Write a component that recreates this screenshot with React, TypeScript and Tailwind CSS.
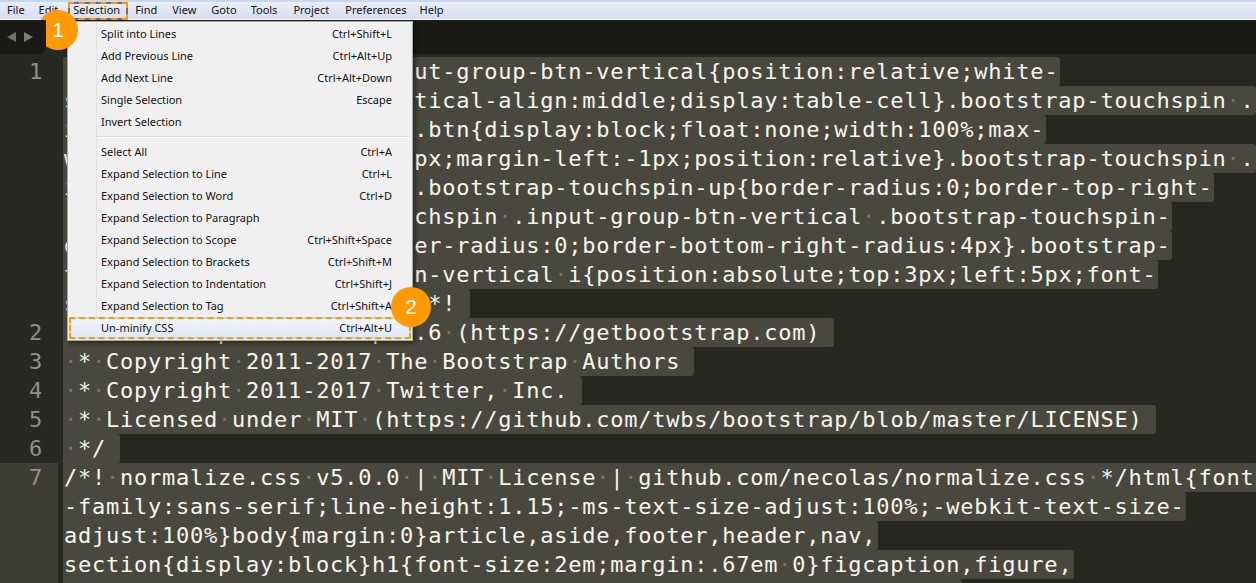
import { Fragment } from "react"

const menuBar = [
  { label: "File", x: "ml-[7px]" },
  { label: "Edit", x: "ml-[14px]" },
  { label: "Selection", x: "ml-[15px]" },
  { label: "Find", x: "ml-[15px]" },
  { label: "View", x: "ml-[15px]" },
  { label: "Goto", x: "ml-[15px]" },
  { label: "Tools", x: "ml-[14px]" },
  { label: "Project", x: "ml-[16px]" },
  { label: "Preferences", x: "ml-[16px]" },
  { label: "Help", x: "ml-[13px]" },
]

const menuGroups = [
  [
    ["Split into Lines", "Ctrl+Shift+L"],
    ["Add Previous Line", "Ctrl+Alt+Up"],
    ["Add Next Line", "Ctrl+Alt+Down"],
    ["Single Selection", "Escape"],
    ["Invert Selection", ""],
  ],
  [
    ["Select All", "Ctrl+A"],
    ["Expand Selection to Line", "Ctrl+L"],
    ["Expand Selection to Word", "Ctrl+D"],
    ["Expand Selection to Paragraph", ""],
    ["Expand Selection to Scope", "Ctrl+Shift+Space"],
    ["Expand Selection to Brackets", "Ctrl+Shift+M"],
    ["Expand Selection to Indentation", "Ctrl+Shift+J"],
    ["Expand Selection to Tag", "Ctrl+Shift+A"],
  ],
]

const codeLines = [
  {
    no: 1,
    rows: [
      ".bootstrap-touchspin .input-group-btn-vertical{position:relative;white-",
      "space:nowrap;width:1%;vertical-align:middle;display:table-cell}.bootstrap-touchspin .",
      "input-group-btn-vertical>.btn{display:block;float:none;width:100%;max-",
      "width:100%;padding:8px 10px;margin-left:-1px;position:relative}.bootstrap-touchspin .",
      "input-group-btn-vertical .bootstrap-touchspin-up{border-radius:0;border-top-right-",
      "radius:4px}.bootstrap-touchspin .input-group-btn-vertical .bootstrap-touchspin-",
      "down{margin-top:-2px;border-radius:0;border-bottom-right-radius:4px}.bootstrap-",
      "touchspin .input-group-btn-vertical i{position:absolute;top:3px;left:5px;font-",
      "size:9px;font-weight:400}/*!",
    ],
  },
  { no: 2, rows: [" * Bootstrap v4.0.0-alpha.6 (https://getbootstrap.com)"] },
  { no: 3, rows: [" * Copyright 2011-2017 The Bootstrap Authors"] },
  { no: 4, rows: [" * Copyright 2011-2017 Twitter, Inc."] },
  { no: 5, rows: [" * Licensed under MIT (https://github.com/twbs/bootstrap/blob/master/LICENSE)"] },
  { no: 6, rows: [" */"] },
  {
    no: 7,
    active: true,
    rows: [
      "/*! normalize.css v5.0.0 | MIT License | github.com/necolas/normalize.css */html{font",
      "-family:sans-serif;line-height:1.15;-ms-text-size-adjust:100%;-webkit-text-size-",
      "adjust:100%}body{margin:0}article,aside,footer,header,nav,",
      "section{display:block}h1{font-size:2em;margin:.67em 0}figcaption,figure,",
      "main{display:block}figure{margin:1em 40px}hr{box-sizing:content-",
    ],
  },
]

// 选中时空格显示为暗色小点
function CodeText({ text }: { text: string }) {
  const parts = text.split(" ")
  return (
    <>
      {parts.map((part, i) => (
        <Fragment key={i}>
          {i > 0 && <span className="text-[#76756b]">·</span>}
          {part}
        </Fragment>
      ))}
    </>
  )
}

function Badge({ n, pos }: { n: number; pos: string }) {
  return (
    <div
      className={`absolute ${pos} flex h-10 w-10 items-center justify-center rounded-full bg-[#ff9a05] font-['Liberation_Sans',sans-serif] text-[21px] text-white`}
    >
      {n}
    </div>
  )
}

function MenuRow({ label, keys }: { label: string; keys: string }) {
  return (
    <div className="flex h-[22px] items-center justify-between pl-[33px] pr-[20px]">
      <span>{label}</span>
      <span>{keys}</span>
    </div>
  )
}

export default function App() {
  return (
    <div className="relative flex h-[583px] w-[1256px] flex-col overflow-hidden bg-[#272822]">
      {/* 菜单栏 */}
      <div className="flex h-[21px] items-center border-b border-white border-t-2 border-t-[#c3d8f2] bg-gradient-to-b from-[#e9eef9] to-[#d8ddf0] font-['Noto_Sans',sans-serif] text-[11px] text-[#111111]">
        {menuBar.map((item) => (
          <span key={item.label} className={item.x}>
            {item.label}
          </span>
        ))}
      </div>

      {/* 标签栏 */}
      <div className="flex h-[34px] items-end bg-[#191a15]">
        <div className="z-10 -mr-[6px] flex h-[34px] w-[46px] items-center gap-[8px] rounded-br-[7px] bg-[#191a15] pl-[7px]">
          <svg width="9" height="10" viewBox="0 0 9 10">
            <path d="M9 0v10L0 5z" fill="#6f6f6b" />
          </svg>
          <svg width="9" height="10" viewBox="0 0 9 10">
            <path d="M0 0v10l9-5z" fill="#7d7d79" />
          </svg>
        </div>
        <div className="h-[30px] w-[300px] rounded-t-[6px] bg-[#272822]" />
      </div>

      {/* 编辑区 */}
      <div className="flex-1 pt-[3px] font-['DejaVu_Sans_Mono',monospace] text-[22px] leading-[29px] tracking-[0.76px] text-[#f6f6f0]">
        {codeLines.map((line) => (
          <div key={line.no} className="flex">
            <div className="w-[63px] shrink-0 pr-[5px]">
              <div
                className={`h-full pr-[15px] text-right text-[#8f908a] ${line.active ? "bg-[#3e3d32]" : ""}`}
              >
                {line.no}
              </div>
            </div>
            <div className="flex flex-col items-start">
              {line.rows.map((row, i) => (
                <div
                  key={i}
                  className={`h-[29px] whitespace-pre rounded-r-[3px] bg-[#49483e] pl-[1px] ${i === line.rows.length - 1 && !line.active ? "pr-[14px]" : "pr-[2px]"}`}
                >
                  <CodeText text={row} />
                </div>
              ))}
            </div>
          </div>
        ))}
      </div>

      {/* Selection 下拉菜单 */}
      <div className="absolute left-[67px] top-[21px] w-[346px] border border-[#a8a8a8] bg-[#f0f0f0] py-[1px] font-['Noto_Sans',sans-serif] text-[11px] text-[#111111] shadow-[2px_2px_4px_rgba(0,0,0,0.5)]">
        <div className="absolute bottom-0 left-[28px] top-0 w-px bg-[#e2e3e3]" />
        {menuGroups[0].map(([label, keys]) => (
          <MenuRow key={label} label={label} keys={keys} />
        ))}
        <div className="my-[3px] ml-[29px] mr-[2px] h-[2px] border-b border-white bg-[#dcdcdc]" />
        {menuGroups[1].map(([label, keys]) => (
          <MenuRow key={label} label={label} keys={keys} />
        ))}
        <div className="relative mx-[1px] flex h-[22px] items-center justify-between rounded-[2px] border-2 border-[#c5d6ee] bg-gradient-to-b from-[#f2f6fc] to-[#dfe8f5] pl-[30px] pr-[17px]">
          <div className="absolute -inset-[2px] rounded-[2px] border-2 border-dashed border-[#ff9a05]" />
          <span>Un-minify CSS</span>
          <span>Ctrl+Alt+U</span>
        </div>
      </div>

      {/* 菜单项高亮框 */}
      <div className="absolute left-[68px] top-[2px] h-[18px] w-[60px] rounded-[2px] border-2 border-[#6d7078]">
        <div className="absolute -inset-[2px] rounded-[2px] border-2 border-dashed border-[#ff9a05]" />
      </div>

      <Badge n={1} pos="left-[38px] top-[10px]" />
      <Badge n={2} pos="left-[391px] top-[287px]" />
    </div>
  )
}
